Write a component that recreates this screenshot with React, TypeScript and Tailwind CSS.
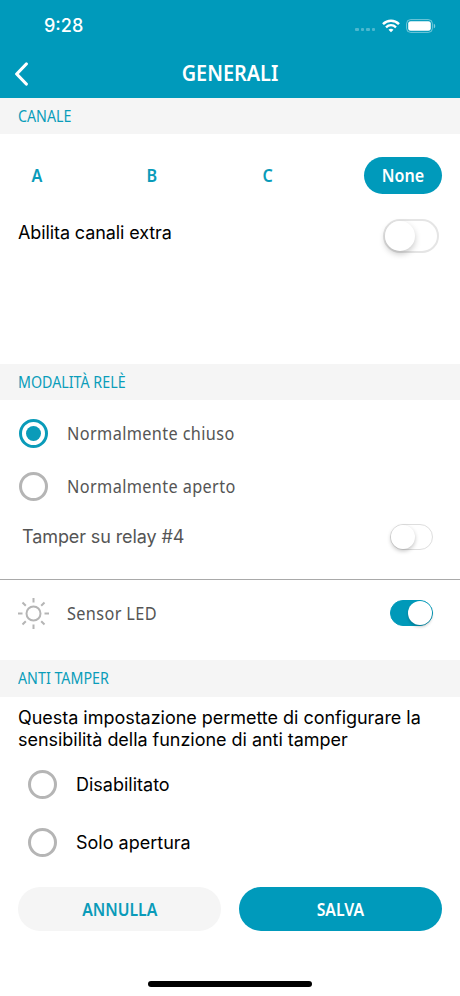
import { useState } from "react";
import clsx from "clsx";

const channels = ["A", "B", "C", "None"];

function SectionHeader({ title, className }: { title: string; className: string }) {
  return (
    <h2 className={clsx("flex items-center bg-[#f5f5f5] px-[18px] pb-px text-[#0a9dba]", className)}>
      <span className="origin-left scale-x-[0.92] font-['Noto_Sans',sans-serif] text-[15.5px] leading-5">{title}</span>
    </h2>
  );
}

function RadioDot({ checked }: { checked: boolean }) {
  return (
    <span
      className={clsx(
        "flex size-[29px] shrink-0 items-center justify-center rounded-full border-[3px]",
        checked ? "border-[#0a9bb9]" : "border-[#b5b5b5]"
      )}
    >
      {checked && <span className="size-[15px] rounded-full bg-[#0a9bb9]"></span>}
    </span>
  );
}

function SmallSwitch({ on, onClick }: { on: boolean; onClick: () => void }) {
  return (
    <button
      type="button"
      role="switch"
      aria-checked={on}
      onClick={onClick}
      className={clsx(
        "flex h-[26px] w-[43px] items-center rounded-full border",
        on ? "justify-end border-[#0099b9] bg-[#0099b9]" : "justify-start border-[#dedede] bg-white"
      )}
    >
      <span
        className={clsx(
          "size-6 rounded-full bg-white",
          on ? "shadow-[0_2px_3px_rgba(0,0,0,0.2)]" : "shadow-[0_2px_4px_rgba(0,0,0,0.24)]"
        )}
      ></span>
    </button>
  );
}

function StatusIcons() {
  return (
    <div className="flex items-center">
      <div className="mt-2 flex gap-[2px]">
        {[0, 1, 2, 3].map((i) => (
          <span key={i} className="size-[3.5px] rounded-[1px] bg-white/30"></span>
        ))}
      </div>
      {/* Wifi */}
      <svg className="ml-[7px]" width="18" height="14" viewBox="0 0 18 14" fill="none" stroke="white">
        <path d="M1 5.2C5.6 .7 12.4 .7 17 5.2" strokeWidth="2.5" />
        <path d="M4 8.3C6.9 5.5 11.1 5.5 14 8.3" strokeWidth="2.3" />
        <path d="M9 13.3 6.5 10.7C8 9.5 10 9.5 11.5 10.7Z" fill="white" stroke="none" />
      </svg>
      {/* Battery */}
      <svg className="ml-[6px]" width="30" height="14" viewBox="0 0 30 14" fill="none">
        <rect x=".6" y=".6" width="25.8" height="12.8" rx="4" stroke="white" strokeOpacity=".45" />
        <rect x="2.2" y="2.2" width="22.6" height="9.6" rx="2.4" fill="white" />
        <path d="M27.8 4.7C29.7 5.3 29.7 8.7 27.8 9.3Z" fill="white" fillOpacity=".5" />
      </svg>
    </div>
  );
}

export default function App() {
  const [channel, setChannel] = useState("None");
  const [extra, setExtra] = useState(false);
  const [relay, setRelay] = useState("Normalmente chiuso");
  const [tamperRelay, setTamperRelay] = useState(false);
  const [led, setLed] = useState(true);
  const [antiTamper, setAntiTamper] = useState("");

  return (
    <div className="flex h-[996px] w-[460px] flex-col overflow-hidden bg-white font-['Inter',sans-serif] text-black">
      {/* Header */}
      <header className="h-[98px] shrink-0 bg-[#009abb] text-white">
        <div className="flex h-[51px] items-center justify-between pr-[24px] pl-[44px]">
          <span className="text-[18px] font-medium">9:28</span>
          <StatusIcons />
        </div>
        <div className="grid h-[46px] grid-cols-[60px_1fr_60px] items-center">
          <button type="button" aria-label="Indietro" className="pl-[14px]">
            <svg width="16" height="24" viewBox="0 0 16 24" fill="none" stroke="white" strokeWidth="3.2" strokeLinecap="round" strokeLinejoin="round">
              <path d="M12.3 2 2.7 12l9.6 10" />
            </svg>
          </button>
          <h1 className="scale-x-[0.945] pb-px text-center font-['Noto_Sans',sans-serif] text-[21px] font-semibold">
            GENERALI
          </h1>
        </div>
      </header>

      {/* Channel */}
      <SectionHeader title="CANALE" className="h-9" />
      <section className="h-[230px] px-[18px] pt-[23px]">
        <div className="flex justify-between">
          {channels.map((item) => (
            <button
              key={item}
              type="button"
              onClick={() => setChannel(item)}
              className={clsx(
                "flex h-[37px] items-center justify-center rounded-full font-['Noto_Sans',sans-serif] text-[17.5px] font-semibold",
                item === "None" ? "w-[78px]" : "w-[37px]",
                channel === item ? "bg-[#009abb] text-white" : "text-[#0a9bb9]"
              )}
            >
              <span className="scale-x-[0.92]">{item}</span>
            </button>
          ))}
        </div>
        <div className="mt-[25px] flex items-start justify-between pr-[3px]">
          <span className="mt-[2px] text-[18px] leading-6 tracking-[-0.1px]">Abilita canali extra</span>
          <button
            type="button"
            role="switch"
            aria-checked={extra}
            onClick={() => setExtra(!extra)}
            className={clsx(
              "flex h-[34px] w-[56px] items-center rounded-full border-2",
              extra ? "justify-end border-[#0099b9] bg-[#0099b9]" : "justify-start border-[#e5e5e5] bg-white"
            )}
          >
            <span className="size-[30px] rounded-full bg-white shadow-[0_3px_6px_rgba(0,0,0,0.22)]"></span>
          </button>
        </div>
      </section>

      {/* Relay mode */}
      <SectionHeader title="MODALITÀ RELÈ" className="h-9" />
      <section className="h-[180px] border-b border-[#a9a9a9] text-[#555]">
        {["Normalmente chiuso", "Normalmente aperto"].map((item, i) => (
          <button
            key={item}
            type="button"
            onClick={() => setRelay(item)}
            className={clsx("flex w-full items-center gap-[19px] pl-[19px]", i === 0 ? "mt-[19px]" : "mt-[24px]")}
          >
            <RadioDot checked={relay === item} />
            <span className="origin-left scale-x-[0.93] pb-px font-['Noto_Sans',sans-serif] text-[17.5px] tracking-[0.4px]">{item}</span>
          </button>
        ))}
        <div className="mt-[22px] flex items-center justify-between pr-[27px] pl-[22px]">
          <span className="text-[18px] tracking-[-0.1px]">Tamper su relay #4</span>
          <SmallSwitch on={tamperRelay} onClick={() => setTamperRelay(!tamperRelay)} />
        </div>
      </section>

      {/* LED */}
      <section className="flex h-20 items-start pt-5 pr-[27px] pl-[17px] text-[#555]">
        <svg className="-mt-[3px]" width="33" height="33" viewBox="0 0 33 33" fill="none" stroke="#b5b5b5" strokeWidth="2">
          <circle cx="16.5" cy="16.5" r="7" />
          <path d="M16.5 1v4.5M16.5 27.5V32M1 16.5h4.5M27.5 16.5H32M5.5 5.5l3.3 3.3M24.2 24.2l3.3 3.3M5.5 27.5l3.3-3.3M24.2 8.8l3.3-3.3" />
        </svg>
        <span className="ml-[17px] origin-left scale-x-[0.93] font-['Noto_Sans',sans-serif] text-[17.5px] leading-[26px] tracking-[0.4px]">
          Sensor LED
        </span>
        <div className="ml-auto">
          <SmallSwitch on={led} onClick={() => setLed(!led)} />
        </div>
      </section>

      {/* Anti tamper */}
      <SectionHeader title="ANTI TAMPER" className="h-[37px]" />
      <section className="px-[18px] pt-[10px]">
        <p className="text-[18px] leading-[22px] tracking-[-0.03px] whitespace-nowrap">
          Questa impostazione permette di configurare la
          <br />
          sensibilità della funzione di anti tamper
        </p>
        <div className="mt-[19px] flex flex-col gap-[29px] pl-[10px]">
          {["Disabilitato", "Solo apertura"].map((item) => (
            <button key={item} type="button" onClick={() => setAntiTamper(item)} className="flex items-center gap-[19px]">
              <RadioDot checked={antiTamper === item} />
              <span className="text-[18px]">{item}</span>
            </button>
          ))}
        </div>
        <div className="mt-[30px] grid grid-cols-2 gap-[18px] font-['Noto_Sans',sans-serif] text-[17.5px] font-semibold">
          <button type="button" className="flex h-11 items-center justify-center rounded-full bg-[#f5f5f5] text-[#0a9bb9]">
            <span className="scale-x-90">ANNULLA</span>
          </button>
          <button type="button" className="flex h-11 items-center justify-center rounded-full bg-[#009abb] text-white">
            <span className="scale-x-90">SALVA</span>
          </button>
        </div>
      </section>

      {/* Home indicator */}
      <div className="mx-auto mt-auto mb-[9px] h-[6px] w-[164px] rounded-full bg-black"></div>
    </div>
  );
}
